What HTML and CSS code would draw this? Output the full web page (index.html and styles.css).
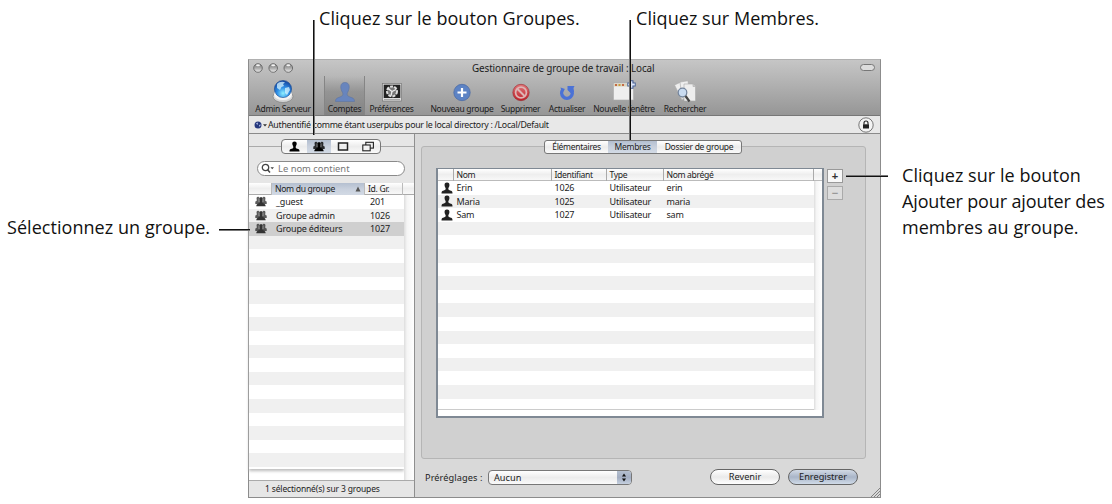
FILE: index.html
```html
<!DOCTYPE html>
<html lang="fr">
<head>
<meta charset="utf-8">
<title>Gestionnaire de groupe de travail</title>
<link rel="stylesheet" href="styles.css">
</head>
<body>
<svg class="defs" width="0" height="0">
  <defs>
    <symbol id="person" viewBox="0 0 12 12"><path d="M6 .5C4.100.5 3.400 1.700 3.600 3.400C3.700 4.800 4.700 5.600 4.700 6.600C4.700 7.900 4.200 8.100 3 8.400C1.200 8.700.5 9 .5 11.500H11.500C11.500 9 10.800 8.700 9 8.400C7.800 8.100 7.300 7.900 7.300 6.600C7.300 5.600 8.300 4.800 8.400 3.400C8.600 1.700 7.900.5 6 .5Z"/></symbol>
    <symbol id="group" viewBox="0 0 12 11"><path d="M3 .8C1.700.8 1.300 1.900 1.700 3.400C2 4.500 1.700 5 .3 5.500V8H11.700V5.500C10.300 5 10 4.500 10.300 3.400C10.700 1.900 10.300.8 9 .8C8.200.8 7.800 1.400 7.700 2C7.300 1.300 6.700 1.100 6 1.100S4.700 1.300 4.300 2C4.200 1.400 3.800.8 3 .8Z" opacity=".8"/><path d="M6 1.800C4.900 1.800 4.400 2.700 4.600 4C4.800 5.200 5.200 5.800 4.900 6.500C4.500 7.600 1.500 7.200 1.300 10.300H10.700C10.500 7.200 7.500 7.600 7.100 6.500C6.800 5.800 7.200 5.200 7.400 4C7.600 2.700 7.100 1.800 6 1.800Z"/><path d="M4 2.500V6M8 2.500V6" stroke="#ddd" stroke-width=".5"/></symbol>
    <radialGradient id="globe" cx=".5" cy=".75" r=".75"><stop offset="0" stop-color="#8ff0ff"/><stop offset=".45" stop-color="#2f91e8"/><stop offset="1" stop-color="#123f9a"/></radialGradient>
    <linearGradient id="light" x2="0" y2="1"><stop offset="0" stop-color="#777"/><stop offset=".5" stop-color="#aaa"/><stop offset="1" stop-color="#eee"/></linearGradient>
    <linearGradient id="red" x2="0" y2="1"><stop offset="0" stop-color="#e0777b"/><stop offset="1" stop-color="#bd1f28"/></linearGradient>
  </defs>
</svg>

<main class="window">
  <header class="chrome">
    <div class="titlebar">
      <svg class="lights" viewBox="0 0 42 10"><g fill="url(#light)" stroke="#666" stroke-width=".9"><circle cx="5" cy="5" r="4.300"/><circle cx="20.200" cy="5" r="4.300"/><circle cx="35.300" cy="5" r="4.300"/></g><g fill="#f4f4f4"><ellipse cx="5" cy="2.300" rx="2" ry="1"/><ellipse cx="20.200" cy="2.300" rx="2" ry="1"/><ellipse cx="35.300" cy="2.300" rx="2" ry="1"/></g></svg>
      <h1 class="title">Gestionnaire de groupe de travail : Local</h1>
      <span class="pill"></span>
    </div>
    <nav class="toolbar">
      <div class="tool t-admin">
        <svg viewBox="0 0 24 24"><ellipse cx="12" cy="16.500" rx="10" ry="6" fill="#d5d5d5" stroke="#777" stroke-width=".6"/><ellipse cx="12" cy="14.500" rx="9" ry="5.500" fill="#f3f3f3"/><circle cx="12" cy="9" r="8.600" fill="url(#globe)" stroke="#174a91" stroke-width=".6"/><path d="M6 4C8 1.500 12 1 14 2.500L12 4L13 6L10.500 7L9 10L6 8ZM14 8L18 7L19 10L16 15L14 13Z" fill="#d8f6ff" opacity=".75"/></svg>
        <span class="lbl">Admin Serveur</span>
      </div>
      <div class="tool t-comptes">
        <svg viewBox="0 0 24 24"><path fill="#6885bd" stroke="#58719f" stroke-width=".5" d="M12 2.500C8.500 2.500 7.500 5 7.800 8C8.100 10.500 9.500 12 9.800 13.500C10 15.500 9.300 16 7 17C4 18 2.500 18.500 2.500 21.500H21.500C21.500 18.500 20 18 17 17C14.700 16 14 15.500 14.200 13.500C14.500 12 15.900 10.500 16.200 8C16.500 5 15.500 2.500 12 2.500Z"/></svg>
        <span class="lbl">Comptes</span>
      </div>
      <div class="tool t-pref">
        <svg viewBox="0 0 24 24"><rect x="2.500" y="3.500" width="19" height="17.500" fill="#ddd" stroke="#777" stroke-width=".7"/><rect x="3.700" y="4.700" width="16.600" height="13.300" fill="#222"/><circle cx="12" cy="11.400" r="5" fill="#777" stroke="#ddd" stroke-width="2" stroke-dasharray="3 1.200"/><path d="M8 8.500L12 11.500L16 9.500M12 11.500L11 15.500" stroke="#eee" stroke-width="1.300" fill="none"/><path d="M4 19.500H20" stroke="#999" stroke-width=".8"/></svg>
        <span class="lbl">Préférences</span>
      </div>
      <div class="tool t-new">
        <svg viewBox="0 0 24 24"><circle cx="12" cy="12.500" r="8.200" fill="#5d83c4" stroke="#4667a3" stroke-width=".7"/><path d="M12 8V17M7.500 12.500H16.500" stroke="#fff" stroke-width="2.200"/></svg>
        <span class="lbl">Nouveau groupe</span>
      </div>
      <div class="tool t-del">
        <svg viewBox="0 0 24 24"><circle cx="12" cy="12.500" r="8.200" fill="url(#red)" stroke="#99272c" stroke-width=".6"/><circle cx="12" cy="12.500" r="5.400" fill="none" stroke="#ddb5b5" stroke-width="1.700"/><path d="M8.500 9L15.500 16" stroke="#ddb5b5" stroke-width="2"/></svg>
        <span class="lbl">Supprimer</span>
      </div>
      <div class="tool t-act">
        <svg viewBox="0 0 24 24"><path d="M8 9.500A5.300 5.300 0 1 0 16.200 9.800" fill="none" stroke="#4b72d6" stroke-width="3.400"/><path d="M12.500 6H19.500L18.500 8L19 12L16 13.500L12.500 10Z" fill="#4b72d6"/><path d="M5.500 7.500L10 9L7 12.500Z" fill="#4b72d6"/></svg>
        <span class="lbl">Actualiser</span>
      </div>
      <div class="tool t-win">
        <svg viewBox="0 0 24 24"><rect x="1.500" y="3" width="20" height="17" fill="#eee" stroke="#aaa" stroke-width=".6"/><path d="M1.800 5H21" stroke="#d9d3bd" stroke-width="3"/><path d="M3 5H5M10 5H12" stroke="#c46a44" stroke-width="2"/><path d="M6.500 5H8.500" stroke="#c99b3c" stroke-width="2"/><path d="M19.500 .3V8.700M15.300 4.500H23.700" stroke="#486397" stroke-width="4"/><path d="M19.500 1.200V7.800M16.200 4.500H22.800" stroke="#dfe8fb" stroke-width="1.800"/></svg>
        <span class="lbl">Nouvelle fenêtre</span>
      </div>
      <div class="tool t-find">
        <svg viewBox="0 0 24 24"><g fill="#eee" stroke="#aaa" stroke-width=".6"><path d="M1.500 5L8 2L15 16L9 20Z"/><path d="M7 2L15 .8L17 17L9 18Z"/><path d="M11 4H20L22.500 6.500V21H11Z"/><path d="M20 4V6.500H22.500" fill="#ccc"/></g><circle cx="9.500" cy="12.500" r="4.300" fill="#c9dbf0" stroke="#73849c" stroke-width="1.200"/><path d="M12.500 16L16.500 21.500" stroke="#444" stroke-width="2.200"/></svg>
        <span class="lbl">Rechercher</span>
      </div>
    </nav>
  </header>

  <div class="status">
    <svg class="mini-globe" viewBox="0 0 14 8"><circle cx="4" cy="4" r="3.500" fill="#27397f"/><path d="M2 2.500L4 1.500L3.500 4ZM5 4L7 3.500L5.500 6Z" fill="#b9c6ea"/><path d="M9 3.200H13L11 5.500Z" fill="#333"/></svg>
    <span class="status-text">Authentifié comme étant userpubs pour le local directory : /Local/Default</span>
    <span class="lock"><svg viewBox="0 0 16 16"><circle cx="8" cy="8" r="7.200" fill="#f4f4f4" stroke="#777"/><rect x="5" y="7.300" width="6" height="4.200" fill="#222"/><path d="M6 7.500V6A2 2 0 0 1 10 6V7.500" fill="none" stroke="#222" stroke-width="1.100"/></svg></span>
  </div>

  <div class="content">
    <aside class="side">
      <div class="seg-row">
        <div class="seg">
          <span><svg class="ic-p"><use href="#person"/></svg></span>
          <span class="on"><svg class="ic-g"><use href="#group"/></svg></span>
          <span><svg class="ic-g" viewBox="0 0 12 11"><rect x="1.500" y="2" width="9" height="7" fill="none" stroke="#222" stroke-width="1.500"/></svg></span>
          <span><svg class="ic-g" viewBox="0 0 12 11"><rect x="3.800" y="1.300" width="7.600" height="5.800" fill="#eee" stroke="#222" stroke-width="1.100"/><rect x=".8" y="4" width="7.400" height="5.800" fill="#f4f4f4" stroke="#222" stroke-width="1.100"/></svg></span>
        </div>
      </div>
      <div class="search">
        <svg viewBox="0 0 15 11"><circle cx="4.500" cy="4.500" r="3.200" fill="none" stroke="#444" stroke-width="1.300"/><path d="M6.800 7L9 9.600" stroke="#444" stroke-width="1.500"/><path d="M9.500 4.200H13L11.200 6.300Z" fill="#444"/></svg>
        <span class="ph">Le nom contient</span>
      </div>
      <div class="glist">
        <div class="ghead"><span></span><span class="sorted">Nom du groupe<svg viewBox="0 0 6 6"><path d="M3 .5L5.500 5.500H.5Z" fill="#555"/></svg></span><span class="gid">Id. Gr.</span><span class="corner"></span></div>
        <div class="gbody">
          <div class="grows">
            <div class="grow"><svg class="ic-g"><use href="#group"/></svg><span>_guest</span><span>201</span></div>
            <div class="grow"><svg class="ic-g"><use href="#group"/></svg><span>Groupe admin</span><span>1026</span></div>
            <div class="grow sel"><svg class="ic-g"><use href="#group"/></svg><span>Groupe éditeurs</span><span>1027</span></div>
          </div>
          <div class="scroll"></div>
        </div>
      </div>
      <footer class="count">1 sélectionné(s) sur 3 groupes</footer>
    </aside>

    <section class="detail">
      <div class="box">
        <div class="tabs"><span class="tab1">Élémentaires</span><span class="tab2 on">Membres</span><span class="tab3">Dossier de groupe</span></div>
        <div class="members">
          <div class="mtable">
            <div class="mhead"><span></span><span>Nom</span><span>Identifiant</span><span>Type</span><span>Nom abrégé</span><span></span></div>
            <div class="mbody">
              <div class="mrows">
                <div class="mrow"><svg class="ic-m"><use href="#person"/></svg><span>Erin</span><span>1026</span><span>Utilisateur</span><span>erin</span></div>
                <div class="mrow"><svg class="ic-m"><use href="#person"/></svg><span>Maria</span><span>1025</span><span>Utilisateur</span><span>maria</span></div>
                <div class="mrow"><svg class="ic-m"><use href="#person"/></svg><span>Sam</span><span>1027</span><span>Utilisateur</span><span>sam</span></div>
              </div>
              <div class="scroll"></div>
            </div>
          </div>
          <div class="pm"><span class="sq">+</span><span class="sq off">−</span></div>
        </div>
      </div>
      <div class="actions">
        <span class="preset">Préréglages :</span>
        <div class="popup"><span>Aucun</span><svg viewBox="0 0 14 14"><path d="M7 2.800L9.200 6H4.800ZM7 11.200L9.200 8H4.800Z" fill="#111"/></svg></div>
        <span class="btn">Revenir</span>
        <span class="btn default">Enregistrer</span>
      </div>
      <svg class="grip" viewBox="0 0 9 9"><path d="M0 9L9 0M3 9L9 3M6 9L9 6" stroke="#777" stroke-width=".9"/></svg>
    </section>
  </div>
</main>

<p class="note n-groups">Cliquez sur le bouton Groupes.</p>
<p class="note n-members">Cliquez sur Membres.</p>
<p class="note n-select">Sélectionnez un groupe.</p>
<p class="note n-add">Cliquez sur le bouton<br><span class="tight">Ajouter pour ajouter des</span><br>membres au groupe.</p>
<span class="rule v r1"></span><span class="rule v r2"></span><span class="rule h r3"></span><span class="rule h r4"></span>
</body>
</html>
```
FILE: styles.css
```css
* { box-sizing: border-box; }
body { margin: 0; width: 1112px; height: 504px; overflow: hidden; background: #fff; color: #1c1c1c; font: 9.200px "Noto Sans", "Open Sans", sans-serif; position: relative; }
span { white-space: nowrap; }
.defs { position: absolute; }

.window { margin-left: 248px; width: 633px; height: 439px; display: flex; flex-direction: column; transform: translateY(59px); border: 1px solid #8c8c8c; border-top: 1px solid #b0b0b0; background: #d9d9d9; }
.chrome { height: 56px; background: linear-gradient(#c6c6c6, #969696); border-bottom: 1px solid #777; }
.titlebar { height: 16px; display: flex; align-items: center; padding: 0 5px 1px 4px; }
.lights { width: 42px; height: 10px; }
.title { flex: 1; margin: 0; padding: 1px 0 0 177px; font-size: 9.900px; letter-spacing: -0.110px; font-weight: 400; line-height: 16px; }
.pill { width: 15px; height: 7px; border: 1px solid #777; border-radius: 4px; background: #ddd; }
.toolbar { display: flex; height: 39px; }
.tool { display: flex; flex-direction: column; align-items: center; }
.tool svg { width: 24px; height: 24px; margin-top: 4px; flex: none; }
.lbl { line-height: 9px; font-size: 8.500px; letter-spacing: -0.290px; }
.t-admin { width: 68px; }
.t-comptes { width: 41px; margin-left: 7px; background: linear-gradient(rgba(0,0,0,0), rgba(0,0,0,.13) 40%); border-left: 1px solid #858585; border-right: 1px solid #858585; }
.t-pref { width: 53px; }
.t-new { width: 70px; margin-left: 9px; }
.t-del { width: 47px; }
.t-act { width: 46px; }
.t-win { width: 68px; }
.t-find { width: 54px; }

.status { height: 18px; background: #e8e8e8; border-bottom: 1px solid #8a8a8a; display: flex; align-items: center; padding: 0 6px 0 5px; line-height: 16px; font-size: 8.800px; letter-spacing: -0.280px; }
.mini-globe { width: 14px; height: 8px; }
.status-text { flex: 1; }
.lock, .lock svg { width: 16px; height: 16px; display: block; }

.content { flex: 1; display: flex; min-height: 0; }
.side { width: 166px; flex: none; border-right: 1px solid #8f8f8f; background: #e6e6e6; display: flex; flex-direction: column; }
.seg-row { height: 26px; display: flex; padding-left: 32px; align-items: center; background: linear-gradient(#aaa, #aaa) 0 12px / 100% 1px no-repeat; }
.seg { width: 100px; height: 15px; display: flex; border: 1px solid #777; border-radius: 4px; background: linear-gradient(#fff, #ececec 50%, #fafafa); overflow: hidden; }
.seg span { flex: 1; display: flex; align-items: center; justify-content: center; }
.seg .on, .tabs .on, .sorted { background: linear-gradient(#b4bfd0, #c8d0dd 50%, #d2dae5); }
.ic-p { width: 11px; height: 11px; }
.ic-g { width: 12px; height: 11px; }
.ic-m { width: 12px; height: 12px; }
.search { margin: 2px 9px 7px 8px; height: 16px; border: 1px solid #8a8a8a; border-radius: 8px; background: #fff; display: flex; align-items: center; color: #777; font-size: 9.400px; }
.search svg { width: 15px; height: 11px; margin: 0 2px 0 3px; }
.ghead { height: 12px; display: grid; grid-template-columns: 23px 93px 38px 1fr; line-height: 12px; font-size: 8.600px; letter-spacing: -0.320px; background: linear-gradient(#fff, #eee 50%, #f8f8f8); border-bottom: 1px solid #aaa; }
.ghead span { border-right: 1px solid #bbb; }
.ghead .corner { border: 0; }
.sorted { display: flex; justify-content: space-between; align-items: center; padding: 0 3px; }
.sorted svg { width: 6px; height: 6px; }
.gid { padding-left: 3px; }
.gbody { display: flex; height: 285px; background: #fff; }
.grows { width: 155px; height: 274px; background: repeating-linear-gradient(#fff 0 13.600px, #f0f0f0 13.600px 27.200px); box-shadow: 0 2px 3px #bbb; }
.grow { height: 13.600px; line-height: 13.600px; display: grid; grid-template-columns: 6px 12px 9px 94px 1fr; align-items: center; font-size: 9px; letter-spacing: -0.170px; }
.grow svg { grid-column: 2; fill: #333; }
.grow span:nth-child(2) { grid-column: 4; }
.sel { background: #cfcfcf; }
.scroll { flex: 1; background: linear-gradient(90deg, #ddd, #f5f5f5 30%, #fff); }
.count { flex: 1; border-top: 1px solid #aaa; background: #e6e6e6; padding-left: 16px; line-height: 16px; font-size: 8.500px; letter-spacing: -0.150px; }

.detail { flex: 1; position: relative; }
.box { margin: 12px 14px 0 6px; height: 313px; border: 1px solid #b5b5b5; border-radius: 3px; background: #d0d0d0; }
.tabs { width: 198px; height: 14px; margin: -7px 0 0 122px; display: flex; border: 1px solid #777; border-radius: 3px; background: linear-gradient(#fff, #ececec 50%, #fafafa); line-height: 12px; overflow: hidden; font-size: 8.500px; letter-spacing: -0.280px; }
.tabs span { text-align: center; }
.tab1 { width: 63px; }
.tab2 { width: 49px; }
.tab3 { flex: 1; }
.members { display: flex; margin: 14px 0 0 14px; gap: 3px; }
.mtable { width: 388px; height: 250px; border: 2px solid #7f8994; border-width: 1px 2px 2px; background: #fff; }
.mhead, .mrow { display: grid; grid-template-columns: 16px 98px 55px 57px 150px 1fr; }
.mhead { height: 12px; line-height: 12px; font-size: 8.600px; letter-spacing: -0.350px; background: linear-gradient(#fff, #eee 50%, #f8f8f8); border-bottom: 1px solid #bbb; }
.mhead span { border-right: 1px solid #aaa; padding-left: 2.500px; }
.mhead span:last-child { border: 0; }
.mbody { display: flex; height: 229px; }
.mrows { width: 376px; background: repeating-linear-gradient(#fff 0 13.600px, #f0f0f0 13.600px 27.200px); border-bottom: 1px solid #ccc; }
.mrow { height: 13.600px; line-height: 13.600px; align-items: center; font-size: 9px; letter-spacing: -0.200px; }
.mrow svg { margin-left: 3px; fill: #222; }
.mrow span { padding-left: 2.500px; }
.pm { display: flex; flex-direction: column; gap: 3px; padding-top: 1px; }
.sq { width: 16px; height: 14px; border: 1px solid #999; background: #f8f8f8; text-align: center; font: 700 11px/12px "Liberation Sans", sans-serif; color: #333; }
.off { color: #999; background: #ddd; border-color: #aaa; }
.actions { display: flex; align-items: center; height: 18px; margin: 9px 22px 0 10px; }
.preset { width: 63px; letter-spacing: 0.080px; }
.popup { width: 144px; height: 15px; margin-right: 78px; border: 1px solid #777; border-radius: 4px; background: linear-gradient(#fff, #ececec 50%, #fafafa); display: flex; justify-content: space-between; overflow: hidden; line-height: 13px; padding-left: 5px; }
.popup svg { width: 14px; height: 13px; background: linear-gradient(#b5c0d0, #a3aec2 50%, #c5d0df); }
.btn { width: 70px; height: 16px; margin-right: 8px; border: 1px solid #666; border-radius: 8px; background: linear-gradient(#fff, #eaeaea 50%, #fff); text-align: center; line-height: 14px; flex: none; }
.default { margin: 0; background: linear-gradient(#d2dae5, #a9b5c8 50%, #d0dbe8); }
.grip { position: absolute; right: 0; bottom: 0; width: 9px; height: 9px; }

.note { position: absolute; margin: 0; font: 18px/26px "Open Sans", "Noto Sans", sans-serif; letter-spacing: 0.050px; color: #111; white-space: nowrap; }
.n-groups { left: 319px; top: 5px; }
.n-members { left: 636px; top: 5px; }
.n-select { left: 7px; top: 214px; }
.n-add { left: 902px; top: 162px; }
.tight { letter-spacing: -0.140px; }
.rule { position: absolute; }
.v { width: 2px; background: linear-gradient(90deg, #111 50%, #777 50%); }
.h { height: 2px; background: linear-gradient(#111 50%, #777 50%); }
.r1 { left: 313px; top: 20px; height: 115px; }
.r2 { left: 629px; top: 20px; height: 120px; background: linear-gradient(90deg, #777 50%, #111 50%); }
.r3 { left: 219px; top: 229px; width: 31px; }
.r4 { left: 846px; top: 175px; width: 42px; background: linear-gradient(#777 50%, #111 50%); }
```
